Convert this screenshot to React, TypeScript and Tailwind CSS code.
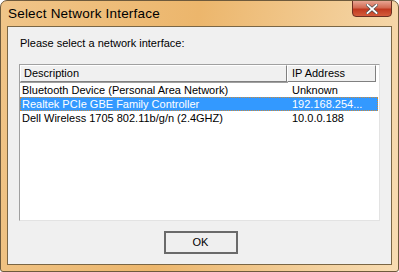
import React from 'react'

const rows = [
  { desc: 'Bluetooth Device (Personal Area Network)', ip: 'Unknown' },
  { desc: 'Realtek PCIe GBE Family Controller', ip: '192.168.254...' },
  { desc: 'Dell Wireless 1705 802.11b/g/n (2.4GHZ)', ip: '10.0.0.188' },
]

const font = { fontFamily: '"Liberation Sans", Arial, sans-serif' }

export default function App() {
  return (
    <div
      className="w-[399px] h-[272px] flex flex-col rounded-t-[7px] rounded-b-[3px] border border-[#6e5a3c] bg-[linear-gradient(100deg,#f0c589_0%,#ecb66c_45%,#f4d3a2_85%,#f8dcb2_100%)] overflow-hidden select-none"
      style={font}
    >
      {/* Title bar */}
      <div className="h-[25px] shrink-0 flex items-start justify-between pl-[7px] pr-[6px]">
        <div className="pt-[5px] text-[13.5px] text-black leading-[15px] tracking-[0.2px]">Select Network Interface</div>
        <button className="w-[40px] h-[17px] mt-[-1px] rounded-b-[4px] border border-[#6b2f22] bg-[linear-gradient(#e8a593_0%,#d26a52_45%,#c0391f_55%,#d45c3c_100%)] flex items-center justify-center">
          <svg width="12" height="10" viewBox="0 0 12 10">
            <path d="M1.5 1 L10.5 9 M10.5 1 L1.5 9" stroke="#4a4a4a" strokeWidth="3.2" strokeLinecap="square" />
            <path d="M1.5 1 L10.5 9 M10.5 1 L1.5 9" stroke="#ffffff" strokeWidth="1.8" strokeLinecap="square" />
          </svg>
        </button>
      </div>

      {/* Client area */}
      <div className="mx-[6px] h-[239px] border border-[#7a6645] bg-[#f0f0f0] flex flex-col px-[11px]">
        <div className="pt-[10px] h-[37px] text-[11px] text-black leading-[13px] pl-[1px]">
          Please select a network interface:
        </div>
        <div className="h-[157px] border border-t-[#a0a0a0] border-l-[#a0a0a0] border-r-[#e3e3e3] border-b-[#e3e3e3] bg-white flex flex-col">
          <div className="flex h-[17px] text-[11px] leading-[15px] text-black">
            <div className="w-[267px] border border-t-white border-l-white border-r-[#808080] border-b-[#808080] bg-[#f0f0f0] pl-[3px] outline outline-1 outline-[#a0a0a0]">
              Description
            </div>
            <div className="w-[89px] border border-t-white border-l-white border-r-[#808080] border-b-[#808080] bg-[#f0f0f0] pl-[4px]">
              IP Address
            </div>
            <div className="flex-1 bg-white" />
          </div>
          <div className="flex flex-col pt-[1px]">
            {rows.map((r, i) => (
              <div
                key={i}
                className={
                  'flex h-[14px] text-[11px] leading-[14px] ' +
                  (i === 1 ? 'bg-[#3399ff] text-white outline outline-1 outline-dotted outline-[#cc8a3a] -outline-offset-1 mr-[1px]' : 'text-black')
                }
              >
                <div className="w-[267px] pl-[2px] whitespace-nowrap overflow-hidden">{r.desc}</div>
                <div className="w-[89px] pl-[5px] whitespace-nowrap">{r.ip}</div>
              </div>
            ))}
          </div>
        </div>
        <div className="flex justify-center pt-[10px]">
          <button className="w-[74px] h-[23px] border-2 border-[#6a6a6a] bg-[#efefef] text-[11px] text-black leading-none ml-[2px]">
            OK
          </button>
        </div>
      </div>
    </div>
  )
}
